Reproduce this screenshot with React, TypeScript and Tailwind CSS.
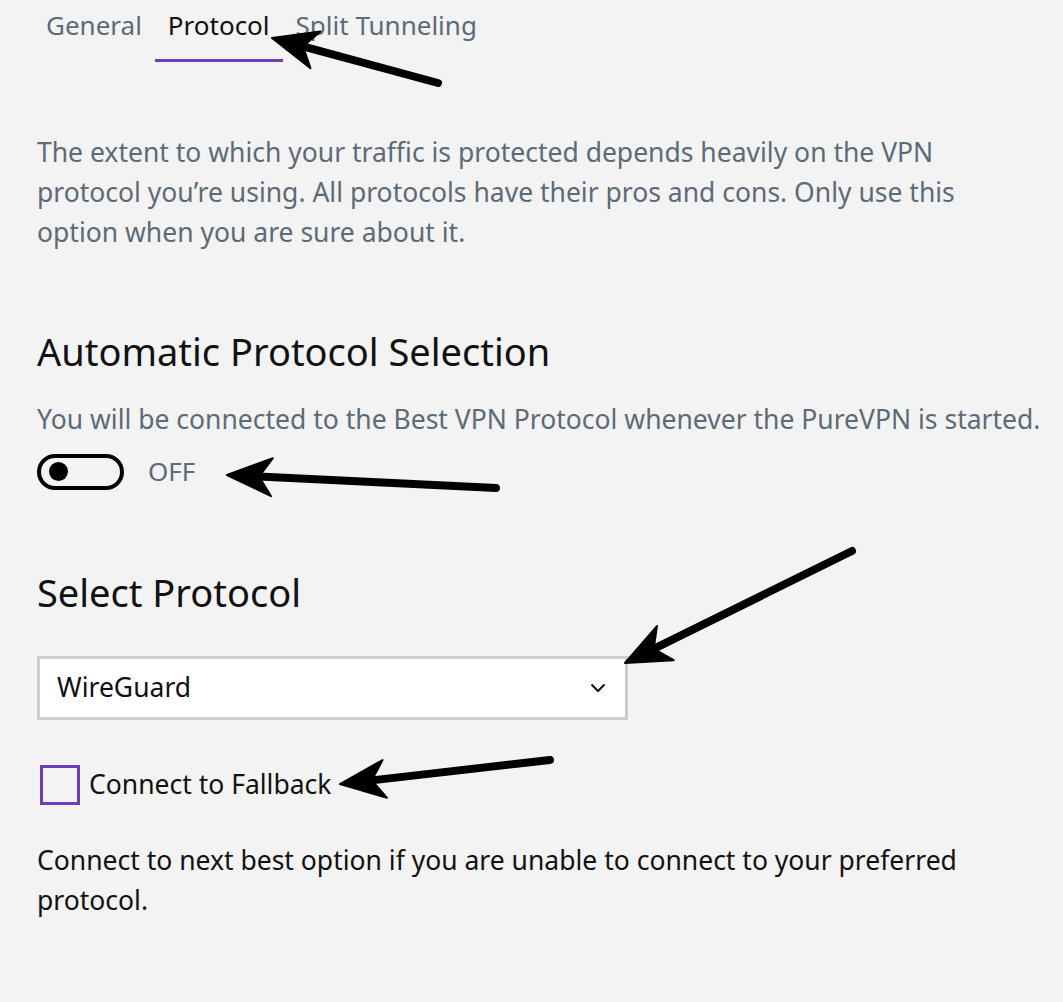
import React from 'react'

const TABS = ['General', 'Protocol', 'Split Tunneling']

// annotation arrows: tail -> tip, in page pixels
const ARROWS = [
  { x1: 438, y1: 83, x2: 272, y2: 38 },
  { x1: 496, y1: 488, x2: 227, y2: 475 },
  { x1: 852, y1: 551, x2: 625, y2: 663 },
  { x1: 550, y1: 760, x2: 340, y2: 784 },
]

const Arrow: React.FC<{ x1: number; y1: number; x2: number; y2: number }> = ({ x1, y1, x2, y2 }) => {
  const dx = x1 - x2
  const dy = y1 - y2
  const len = Math.hypot(dx, dy)
  const ux = dx / len
  const uy = dy / len
  const px = -uy
  const py = ux
  const head = 45
  const half = 19
  const notch = 32
  const bx = x2 + ux * head
  const by = y2 + uy * head
  const nx = x2 + ux * notch
  const ny = y2 + uy * notch
  const pts = [
    [x2, y2],
    [bx + px * half, by + py * half],
    [nx, ny],
    [bx - px * half, by - py * half],
  ]
    .map((p) => p.join(','))
    .join(' ')
  return (
    <g>
      <line x1={x1} y1={y1} x2={nx} y2={ny} stroke="#000" strokeWidth={8} strokeLinecap="round" />
      <polygon points={pts} fill="#000" stroke="#000" strokeWidth={2} strokeLinejoin="round" />
    </g>
  )
}

export default function App() {
  return (
    <div
      className="relative min-h-[1002px] w-full overflow-hidden bg-[#f3f3f3] text-[#111]"
      style={{ fontFamily: '"Noto Sans", "Open Sans", sans-serif' }}
    >
      {/* Tabs */}
      <div className="flex pl-[33px] pt-[4px]">
        {TABS.map((tab) => {
          const active = tab === 'Protocol'
          return (
            <div key={tab} className="flex flex-col items-stretch">
              <span
                className={`px-[13px] text-[26px] leading-[42px] ${active ? 'text-[#111]' : 'text-[#5d6a77]'}`}
              >
                {tab}
              </span>
              <span className={`mt-[13px] h-[3px] ${active ? 'bg-[#6a3fb8]' : 'bg-transparent'}`} />
            </div>
          )
        })}
      </div>

      <div className="pl-[37px]">
        {/* Intro */}
        <p className="mt-[70px] text-[26.5px] leading-[40px] text-[#5d6a77]">
          The extent to which your traffic is protected depends heavily on the VPN
          <br />
          protocol you’re using. All protocols have their pros and cons. Only use this
          <br />
          option when you are sure about it.
        </p>

        {/* Automatic protocol selection */}
        <h2 className="mt-[75px] text-[38px] leading-[48px] text-[#111]">Automatic Protocol Selection</h2>
        <p className="mt-[26px] whitespace-nowrap text-[26.5px] leading-[36px] text-[#5d6a77]">
          You will be connected to the Best VPN Protocol whenever the PureVPN is started.
        </p>
        <div className="mt-[15px] flex items-center gap-[24px]">
          <div className="flex h-[36px] w-[87px] items-center rounded-full border-[4px] border-black pl-[8px]">
            <span className="h-[19px] w-[19px] rounded-full bg-black" />
          </div>
          <span className="text-[26px] text-[#5d6a77]">OFF</span>
        </div>

        {/* Select protocol */}
        <h2 className="mt-[77px] text-[38px] leading-[48px] text-[#111]">Select Protocol</h2>
        <div className="mt-[40px] flex h-[64px] w-[591px] items-center justify-between border-[3px] border-[#cccccc] bg-white pl-[17px] pr-[19px]">
          <span className="text-[26.5px] text-[#111]">WireGuard</span>
          <svg width="16" height="10" viewBox="0 0 16 10" fill="none">
            <path d="M1.5 1.5 L8 8 L14.5 1.5" stroke="#111" strokeWidth="2" />
          </svg>
        </div>

        <label className="mt-[45px] flex items-center gap-[9px] pl-[3px]">
          <span className="h-[40px] w-[40px] border-[3px] border-[#6a3fb8]" />
          <span className="text-[26.5px] text-[#111]">Connect to Fallback</span>
        </label>

        <p className="mt-[35px] text-[26.5px] leading-[40px] text-[#111]">
          Connect to next best option if you are unable to connect to your preferred
          <br />
          protocol.
        </p>
      </div>

      {/* annotation arrows */}
      <svg className="pointer-events-none absolute inset-0" width="1063" height="1002" viewBox="0 0 1063 1002">
        {ARROWS.map((a, i) => (
          <Arrow key={i} {...a} />
        ))}
      </svg>
    </div>
  )
}
